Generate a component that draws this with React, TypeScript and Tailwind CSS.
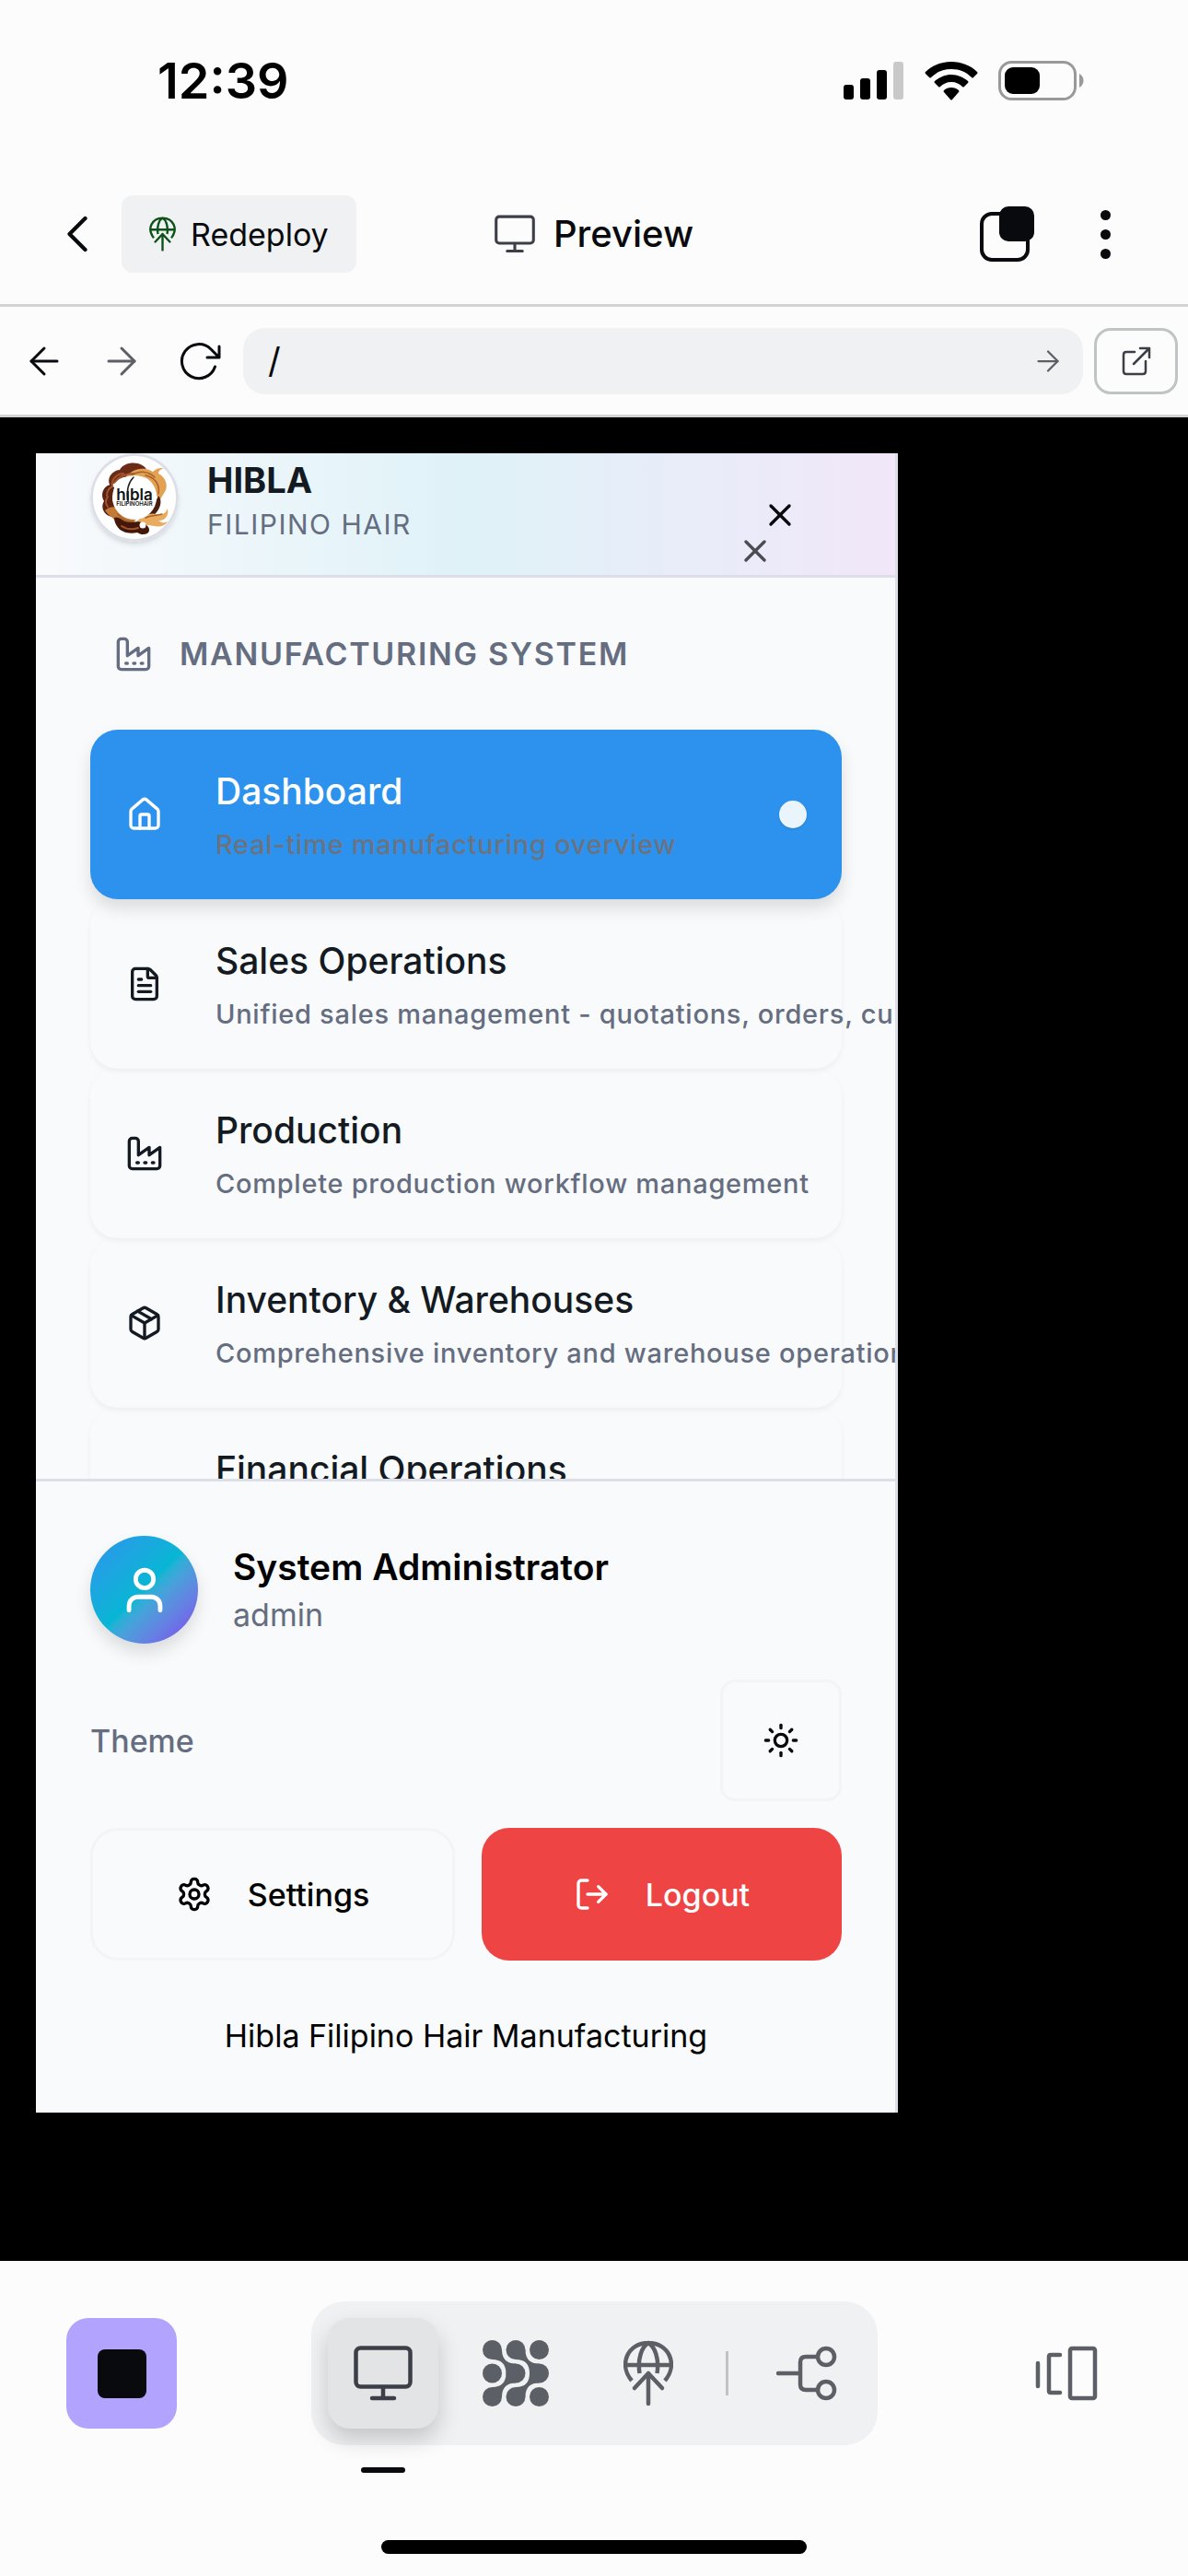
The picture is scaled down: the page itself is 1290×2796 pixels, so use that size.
import { ArrowLeft, ArrowRight, ChevronLeft, FileText, House, LogOut, Package, Sun, User, X } from "lucide-react";

const ink = "#3c3f48";
const mute = "#5c5f66";

function Factory({ className }: { className: string }) {
  return (
    <svg viewBox="0 0 24 24" className={className} fill="none" stroke="currentColor" strokeWidth="2" strokeLinecap="round" strokeLinejoin="round">
      <path d="M2 20a2 2 0 0 0 2 2h16a2 2 0 0 0 2-2V8l-7 5V8l-7 5V4a2 2 0 0 0-2-2H4a2 2 0 0 0-2 2ZM17 18h1M12 18h1M7 18h1" />
    </svg>
  );
}

function Gear({ className }: { className: string }) {
  return (
    <svg viewBox="0 0 24 24" className={className} fill="none" stroke="currentColor" strokeWidth="2" strokeLinecap="round" strokeLinejoin="round">
      <path d="M12.220 2h-.440a2 2 0 0 0-2 2v.180a2 2 0 0 1-1 1.730l-.430.250a2 2 0 0 1-2 0l-.150-.080a2 2 0 0 0-2.730.730l-.220.380a2 2 0 0 0 .730 2.730l.150.100a2 2 0 0 1 1 1.720v.510a2 2 0 0 1-1 1.740l-.150.090a2 2 0 0 0-.730 2.730l.220.380a2 2 0 0 0 2.730.730l.150-.080a2 2 0 0 1 2 0l.430.250a2 2 0 0 1 1 1.730V20a2 2 0 0 0 2 2h.440a2 2 0 0 0 2-2v-.180a2 2 0 0 1 1-1.730l.430-.250a2 2 0 0 1 2 0l.150.080a2 2 0 0 0 2.730-.730l.220-.390a2 2 0 0 0-.730-2.730l-.150-.080a2 2 0 0 1-1-1.740v-.500a2 2 0 0 1 1-1.740l.150-.090a2 2 0 0 0 .730-2.730l-.220-.380a2 2 0 0 0-2.730-.730l-.150.080a2 2 0 0 1-2 0l-.430-.250a2 2 0 0 1-1-1.730V4a2 2 0 0 0-2-2z" />
      <circle cx="12" cy="12" r="3" />
    </svg>
  );
}

function Monitor({ className }: { className: string }) {
  return (
    <svg viewBox="0 0 64 60" className={className} fill="none" stroke={ink} strokeWidth="4.5" strokeLinecap="round">
      <rect x="2.5" y="2.5" width="59" height="42" rx="5" />
      <path d="M32 45v11M20 57h24" />
    </svg>
  );
}

function GlobeUp({ className, color }: { className: string; color: string }) {
  return (
    <svg viewBox="0 0 54 72" className={className} fill="none" stroke={color} strokeWidth="4.500" strokeLinecap="round">
      <path strokeLinecap="butt" d="M9 44C-6 26 5 3 27 3s33 23 18 41M2 27h50M17.500 36C15 20 20 7 27 3c7 4 12 17 9.500 33" />
      <path strokeLinejoin="round" d="M27 69V36M12 52l15-16 15 16" />
    </svg>
  );
}

function Lattice() {
  return (
    <svg viewBox="0 0 72 72" className="size-[72px]" fill={mute}>
      <circle cx="10.500" cy="10.500" r="10.500" />
      <circle cx="36" cy="10.500" r="10.500" />
      <circle cx="61.500" cy="10.500" r="10.500" />
      <circle cx="10.500" cy="36" r="10.500" />
      <circle cx="36" cy="36" r="10.500" />
      <circle cx="61.500" cy="36" r="10.500" />
      <circle cx="10.500" cy="61.500" r="10.500" />
      <circle cx="36" cy="61.500" r="10.500" />
      <circle cx="61.500" cy="61.500" r="10.500" />
      <path d="M21 10.500C21 21 27 25.500 36 25.500V46.500C27 46.500 21 51 21 61.500L10.500 51C20 51 25.500 46 25.500 36S20 21 10.500 21ZM46.500 10.500C46.500 21 52 25.500 61.500 25.500V46.500C52 46.500 46.500 51 46.500 61.500L36 51C46 51 51 46 51 36S46 21 36 21Z" />
    </svg>
  );
}

function Logo() {
  return (
    <svg viewBox="0 0 96 96" className="size-24 shrink-0 rounded-full bg-white shadow-md" fill="none" strokeLinecap="round">
      <circle cx="48" cy="48" r="46.500" stroke="#dcdfe8" strokeWidth="3" fill="#fff" />
      <path d="M22 36c-6-10 4-18 10-18 4-8 18-10 26-4 4 3 4 6 2 9L36 26c-6 2-10 6-14 10Z" fill="#6a2c16" />
      <path d="M22 34c-9 2-11 12-7 18-5 8 2 17 10 17l8-8-9-10 2-14Z" fill="#5a2412" />
      <path d="M38 26c8-10 22-12 30-6 4-4 8-4 12-4-3 1-6 3-6 6 8 4 10 12 8 18l-6 10-4-4c0-8-6-18-14-20-8-3-14 0-20 0Z" fill="#e3a154" />
      <path d="M74 46c4 4 3 12-2 18-4 6-12 9-18 9l-2-6 16-8Z" fill="#4a1c0d" />
      <path d="M50 74c8-6 14-10 22-8s10-2 12-6c2 8-4 14-10 13 4 3 7 3 10 1-5 8-14 5-20 4-6 0-10 1-14-4Z" fill="#e8ab60" />
      <path d="M16 62c4-4 12-6 16 0s10 8 18 9l-6 9c-10 2-14-2-17-7-3-4-7-5-11-11Z" fill="#c27a35" />
      <path d="M26 70c4-2 8 2 12 4 8 2 14-2 20 2 6 3 8 8 4 11-4 2-8 1-11-1-8 2-18 0-22-7-2-3-3-6-3-9Z" fill="#43180b" />
      <path d="M26 32c4-6 12-10 22-10M24 36c-2-8 6-14 12-14M18 46c0-4 2-8 6-10M19 58c-3-4-2-8 0-11M34 79c6 4 12 4 18 2" stroke="#a4542c" strokeWidth="2" />
      <path d="M44 24c10-6 20-4 26 2M60 24c10 2 16 10 14 20M30 66c4 6 10 8 16 8M60 70c6-3 12-2 18-4" stroke="#a8622a" strokeWidth="1.500" />
      <circle cx="57" cy="78" r="3.500" fill="#fff" />
      <circle cx="48" cy="48" r="24" fill="#fff" />
      <path d="M47 26c-6 6-8 14-6 26" stroke="#222" strokeWidth="1.500" />
      <text x="48" y="51" textAnchor="middle" fill="#111" fontFamily="Inter, sans-serif" fontSize="17" fontWeight="600">hıbla</text>
      <text x="48" y="57" textAnchor="middle" fill="#111" fontFamily="Inter, sans-serif" fontSize="6" fontWeight="600">FILIPINOHAIR</text>
    </svg>
  );
}

function StatusBar() {
  return (
    <div className="flex h-[178px] items-start justify-between pt-[56px] pr-[112px] pl-[171px]">
      <time className="text-[54px] leading-[64px] font-semibold text-black">12:39</time>
      <div className="flex h-16 items-center gap-[22px]">
        <svg viewBox="0 0 66 42" className="h-[42px] w-[66px]">
          <rect y="25" width="11" height="16" rx="3" />
          <rect x="18" y="18" width="11" height="23" rx="3" />
          <rect x="36" y="9" width="11" height="32" rx="3" />
          <rect x="54" y="0" width="11" height="41" rx="3" fill="#c9c9c9" />
        </svg>
        <svg viewBox="0 0 58 42" className="h-[42px] w-[58px]">
          <path d="M29 0C18 0 8 4 1 11q-1 1 0 2l4 4q1 1 2 0c6-6 13-9 22-9s16 3 22 9q1 1 2 0l4-4q1-1 0-2C50 4 40 0 29 0Z" />
          <path d="M29 14c-7 0-13 3-18 7q-1 1 0 2l4 4q1 1 2 0c3-3 7-5 12-5s9 2 12 5q1 1 2 0l4-4q1-1 0-2c-5-4-11-7-18-7Z" />
          <path d="M29 28c-3 0-6 1-8 3q-1 1 0 2l7 8q1 1 2 0l7-8q1-1 0-2c-2-2-5-3-8-3Z" />
        </svg>
        <svg viewBox="0 0 94 44" className="h-11 w-[94px]">
          <rect x="1.500" y="1.500" width="82" height="40" rx="13" fill="none" stroke="#999" strokeWidth="3" />
          <rect x="7" y="7" width="38" height="29" rx="9" />
          <path d="M88 14c6 3 6 12 0 15Z" fill="#999" />
        </svg>
      </div>
    </div>
  );
}

function TopBar() {
  return (
    <header className="grid h-[155px] grid-cols-[1fr_auto_1fr] items-start border-b-[3px] border-[#d3d3d5] pt-[34px]">
      <div className="flex items-center pl-[50px]">
        <button aria-label="Back" className="flex w-[82px] items-center">
          <ChevronLeft className="size-[68px] shrink-0" strokeWidth={1.5} color="#080a0d" />
        </button>
        <button className="flex h-[84px] items-center gap-4 rounded-xl bg-[#eff1f2] px-[30px] text-[34px]">
          <GlobeUp className="h-[38px] w-[29px]" color="#0d5218" />
          Redeploy
        </button>
      </div>
      <h1 className="flex h-[84px] items-center gap-5 text-[40px] font-medium">
        <Monitor className="h-[42px] w-[44px]" />
        Preview
      </h1>
      <div className="flex h-[84px] items-center justify-end gap-[71px] pr-[84px]">
        <button aria-label="Tabs">
          <svg viewBox="0 0 60 60" className="size-[60px]">
            <rect x="2" y="8" width="50" height="50" rx="11" fill="none" stroke="#080a0d" strokeWidth="4" />
            <rect x="21" y="0" width="38" height="38" rx="10" fill="#080a0d" />
          </svg>
        </button>
        <button aria-label="More" className="flex flex-col gap-2.5">
          <span className="size-[11px] rounded-full bg-[#080a0d]" />
          <span className="size-[11px] rounded-full bg-[#080a0d]" />
          <span className="size-[11px] rounded-full bg-[#080a0d]" />
        </button>
      </div>
    </header>
  );
}

function AddressBar() {
  return (
    <nav className="flex h-[120px] items-center gap-3 border-b-[3px] border-[#d3d3d5] pr-[11px] pl-6">
      <div className="flex w-[228px] items-center gap-[36px]">
        <button aria-label="Go back"><ArrowLeft className="size-12" strokeWidth={1.5} /></button>
        <button aria-label="Go forward"><ArrowRight className="size-12" strokeWidth={1.5} color={mute} /></button>
        <button aria-label="Reload">
          <svg viewBox="0 0 48 48" className="size-12" fill="none" stroke="#080a0d" strokeWidth="3" strokeLinecap="round" strokeLinejoin="round">
            <path d="M41.500 30A18.500 18.500 0 1 1 37 11l9 9M46 8v12H33" />
          </svg>
        </button>
      </div>
      <form className="flex h-[72px] flex-1 items-center rounded-3xl bg-[#eff1f2] pr-5 pl-[27px]">
        <input aria-label="Address" defaultValue="/" className="min-w-0 flex-1 bg-transparent text-[38px] outline-none" />
        <button type="button" aria-label="Go"><ArrowRight className="size-9" strokeWidth={1.5} color={mute} /></button>
      </form>
      <button aria-label="Open in new tab" className="flex h-[72px] w-[91px] items-center justify-center rounded-[18px] border-[3px] border-[#c0c4c4]">
        <svg viewBox="0 0 32 32" className="size-8" fill="none" stroke={ink} strokeWidth="2.500" strokeLinecap="round" strokeLinejoin="round">
          <path d="M14 6H5q-3 0-3 3v18q0 3 3 3h18q3 0 3-3v-11M20 2h10v10M30 2L13 19" />
        </svg>
      </button>
    </nav>
  );
}

const items = [
  { label: "Dashboard", note: "Real-time manufacturing overview", Icon: House, active: true },
  { label: "Sales Operations", note: "Unified sales management - quotations, orders, customers", Icon: FileText },
  { label: "Production", note: "Complete production workflow management", Icon: Factory },
  { label: "Inventory & Warehouses", note: "Comprehensive inventory and warehouse operations", Icon: Package },
  { label: "Financial Operations", note: "", Icon: null },
];

function MenuItem({ label, note, Icon, active }: (typeof items)[number]) {
  return (
    <a
      href="#"
      className={
        active
          ? "relative z-10 flex h-[184px] items-center rounded-[30px] bg-[#2c92ee] pr-[38px] pl-[39px] text-white shadow-[0_10px_18px_rgba(0,0,0,0.12)]"
          : "flex h-[184px] items-center rounded-[30px] pr-[38px] pl-[39px] text-[#141a22] shadow-[0_3px_6px_rgba(0,0,0,0.05)]"
      }
    >
      <span className="w-[97px] shrink-0">{Icon && <Icon className="size-10" />}</span>
      <span className="flex min-w-0 flex-1 flex-col gap-2 pt-1.5 whitespace-nowrap">
        <span className="text-[39px] leading-[52px] font-medium">{label}</span>
        <span className={active ? "h-12 text-[29px] leading-12 font-medium tracking-wide text-[#6b7280]" : "h-12 text-[29px] leading-12 font-medium tracking-wide text-[#656d80]"}>{note}</span>
      </span>
      {active && <span className="size-[30px] shrink-0 rounded-full bg-[#e9f4fd] shadow-sm" />}
    </a>
  );
}

function Sidebar() {
  return (
    <aside className="w-[936px] max-w-full overflow-hidden border-r-[3px] border-[#dcdfe8] bg-[#f9fafc]">
      <div className="relative flex h-[135px] items-start gap-[31px] border-b-[3px] border-[#dcdfe8] bg-linear-to-r from-[#f9fafc] via-[#dff2f8] to-[#f1e7f9] pl-[59px]">
        <Logo />
        <div className="pt-[5px]">
          <h2 className="text-[38px] leading-[48px] font-bold text-[#141a22]">HIBLA</h2>
          <p className="text-[30px] leading-[48px] tracking-wider text-[#656d80]">FILIPINO HAIR</p>
        </div>
        <button aria-label="Close menu" className="absolute top-[47px] right-[105px]"><X className="size-10" strokeWidth={2} /></button>
        <button aria-label="Close" className="absolute top-[86px] right-[132px] opacity-70"><X className="size-10" strokeWidth={2} /></button>
      </div>
      <nav className="h-[978px] overflow-hidden pr-[58px] pl-[59px]">
        <h3 className="flex h-[165px] items-center gap-[30px] pl-[27px] text-[34px] font-semibold tracking-wider text-[#656d80]">
          <Factory className="size-10" />
          MANUFACTURING SYSTEM
        </h3>
        {items.map((item) => <MenuItem key={item.label} {...item} />)}
      </nav>
      <footer className="border-t-[3px] border-[#dcdfe8] pt-[59px] pr-[58px] pl-[59px]">
        <div className="flex items-center gap-[38px]">
          <span className="flex size-[117px] items-center justify-center rounded-full bg-linear-to-br from-[#2c92ee] via-[#06b6d4] to-[#7c3aed] text-white shadow-[0_10px_18px_rgba(0,0,0,0.12)]">
            <User className="size-[58px]" />
          </span>
          <div>
            <p className="text-[39px] leading-[54px] font-semibold text-black">System Administrator</p>
            <p className="text-[34px] leading-[50px] text-[#656d80]">admin</p>
          </div>
        </div>
        <div className="mt-[39px] flex items-center justify-between">
          <span className="text-[34px] font-medium text-[#656d80]">Theme</span>
          <button aria-label="Toggle theme" className="flex size-[132px] items-center justify-center rounded-2xl border-[3px] border-[#f3f4f6]"><Sun className="size-10" /></button>
        </div>
        <div className="mt-[29px] grid grid-cols-[1fr_391px] gap-[29px] text-[34px] font-medium">
          <button className="flex h-[144px] items-center justify-center gap-[38px] rounded-[30px] border-[3px] border-[#f3f4f6] text-black"><Gear className="size-10" />Settings</button>
          <button className="flex h-[144px] items-center justify-center gap-[38px] rounded-[30px] bg-[#ef4444] text-white"><LogOut className="size-10" />Logout</button>
        </div>
        <p className="pt-14 pb-[57px] text-center text-[34px] leading-[52px] text-black">Hibla Filipino Hair Manufacturing</p>
      </footer>
    </aside>
  );
}

function Dock() {
  return (
    <footer className="flex flex-col items-center">
      <div className="grid w-full grid-cols-[1fr_auto_1fr] items-center pt-11">
        <button aria-label="Stop" className="ml-[72px] flex size-[120px] items-center justify-center rounded-3xl bg-[#b2a3ff]">
          <span className="size-[53px] rounded-lg bg-[#080a0d]" />
        </button>
        <div className="flex h-[156px] w-[615px] items-center rounded-[36px] bg-[#eff1f2] pl-[18px]">
          <button aria-label="Preview" className="relative flex size-[120px] items-center justify-center rounded-3xl bg-[#e3e4e6] shadow-[0_12px_24px_rgba(0,0,0,0.18)]">
            <Monitor className="h-[60px] w-16" />
            <span className="absolute top-[162px] h-1.5 w-12 rounded-full bg-[#080a0d]" />
          </button>
          <button aria-label="Agent" className="ml-12"><Lattice /></button>
          <button aria-label="Deploy" className="ml-[81px]"><GlobeUp className="h-[72px] w-[54px]" color={mute} /></button>
          <span className="ml-[57px] h-12 w-[3px] bg-[#c0c2c5]" />
          <button aria-label="Version control" className="ml-[52px]">
            <svg viewBox="0 0 66 60" className="h-[60px] w-[66px]" fill="none" stroke={mute} strokeWidth="4.500" strokeLinecap="round">
              <path d="M2 30h24M43 12H32q-6 0-6 6v24q0 6 6 6h11" />
              <circle cx="54" cy="12" r="9" />
              <circle cx="54" cy="48" r="9" />
            </svg>
          </button>
        </div>
        <button aria-label="Switch layout" className="mr-[98px] justify-self-end">
          <svg viewBox="0 0 68 60" className="h-[60px] w-[68px]" fill="none" stroke={mute} strokeWidth="4.500" strokeLinecap="round" strokeLinejoin="round">
            <path d="M3 19v25M27 10H17q-2 0-2 2v37q0 2 2 2h10" />
            <rect x="38" y="3" width="27" height="54" rx="2" />
          </svg>
        </button>
      </div>
      <div className="mt-[103px] mb-6 h-[15px] w-[462px] rounded-full bg-black" />
    </footer>
  );
}

export default function App() {
  return (
    <div className="flex min-h-screen flex-col bg-[#fcfcfc] font-[Inter,sans-serif] text-[#080a0d]">
      <StatusBar />
      <TopBar />
      <AddressBar />
      <main className="flex-1 bg-black pt-[39px] pb-[160px] pl-[39px]">
        <Sidebar />
      </main>
      <Dock />
    </div>
  );
}
